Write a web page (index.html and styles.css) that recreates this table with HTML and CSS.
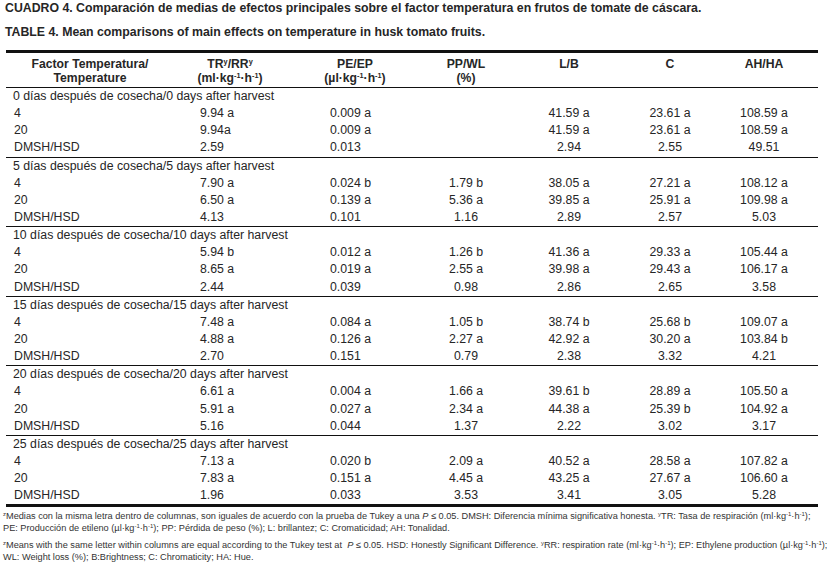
FILE: index.html
```html
<!DOCTYPE html>
<html lang="es">
<head>
<meta charset="utf-8">
<title>Cuadro 4</title>
<link rel="stylesheet" href="styles.css">
</head>
<body>
<div class="page">
  <p class="caption">CUADRO 4. Comparación de medias de efectos principales sobre el factor temperatura en frutos de tomate de cáscara.</p>
  <p class="caption caption-en">TABLE 4. Mean comparisons of main effects on temperature in husk tomato fruits.</p>

  <div class="table">
    <div class="head">
      <div class="hc c1">Factor Temperatura/<br>Temperature</div>
      <div class="hc c2">TR<sup>y</sup>/RR<sup>y</sup><br>(ml·kg<sup>-1</sup>·h<sup>-1</sup>)</div>
      <div class="hc c3">PE/EP<br>(µl·kg<sup>-1</sup>·h<sup>-1</sup>)</div>
      <div class="hc c4">PP/WL<br>(%)</div>
      <div class="hc c5">L/B</div>
      <div class="hc c6">C</div>
      <div class="hc c7">AH/HA</div>
    </div>

    <div class="group">
      <div class="label">0 días después de cosecha/0 days after harvest</div>
      <div class="row"><span>4</span><span>9.94 a</span><span>0.009 a</span><span></span><span>41.59 a</span><span>23.61 a</span><span>108.59 a</span></div>
      <div class="row"><span>20</span><span>9.94a</span><span>0.009 a</span><span></span><span>41.59 a</span><span>23.61 a</span><span>108.59 a</span></div>
      <div class="row"><span>DMSH/HSD</span><span>2.59</span><span>0.013</span><span></span><span>2.94</span><span>2.55</span><span>49.51</span></div>
    </div>

    <div class="group">
      <div class="label">5 días después de cosecha/5 days after harvest</div>
      <div class="row"><span>4</span><span>7.90 a</span><span>0.024 b</span><span>1.79 b</span><span>38.05 a</span><span>27.21 a</span><span>108.12 a</span></div>
      <div class="row"><span>20</span><span>6.50 a</span><span>0.139 a</span><span>5.36 a</span><span>39.85 a</span><span>25.91 a</span><span>109.98 a</span></div>
      <div class="row"><span>DMSH/HSD</span><span>4.13</span><span>0.101</span><span>1.16</span><span>2.89</span><span>2.57</span><span>5.03</span></div>
    </div>

    <div class="group">
      <div class="label">10 días después de cosecha/10 days after harvest</div>
      <div class="row"><span>4</span><span>5.94 b</span><span>0.012 a</span><span>1.26 b</span><span>41.36 a</span><span>29.33 a</span><span>105.44 a</span></div>
      <div class="row"><span>20</span><span>8.65 a</span><span>0.019 a</span><span>2.55 a</span><span>39.98 a</span><span>29.43 a</span><span>106.17 a</span></div>
      <div class="row"><span>DMSH/HSD</span><span>2.44</span><span>0.039</span><span>0.98</span><span>2.86</span><span>2.65</span><span>3.58</span></div>
    </div>

    <div class="group">
      <div class="label">15 días después de cosecha/15 days after harvest</div>
      <div class="row"><span>4</span><span>7.48 a</span><span>0.084 a</span><span>1.05 b</span><span>38.74 b</span><span>25.68 b</span><span>109.07 a</span></div>
      <div class="row"><span>20</span><span>4.88 a</span><span>0.126 a</span><span>2.27 a</span><span>42.92 a</span><span>30.20 a</span><span>103.84 b</span></div>
      <div class="row"><span>DMSH/HSD</span><span>2.70</span><span>0.151</span><span>0.79</span><span>2.38</span><span>3.32</span><span>4.21</span></div>
    </div>

    <div class="group">
      <div class="label">20 días después de cosecha/20 days after harvest</div>
      <div class="row"><span>4</span><span>6.61 a</span><span>0.004 a</span><span>1.66 a</span><span>39.61 b</span><span>28.89 a</span><span>105.50 a</span></div>
      <div class="row"><span>20</span><span>5.91 a</span><span>0.027 a</span><span>2.34 a</span><span>44.38 a</span><span>25.39 b</span><span>104.92 a</span></div>
      <div class="row"><span>DMSH/HSD</span><span>5.16</span><span>0.044</span><span>1.37</span><span>2.22</span><span>3.02</span><span>3.17</span></div>
    </div>

    <div class="group last">
      <div class="label">25 días después de cosecha/25 days after harvest</div>
      <div class="row"><span>4</span><span>7.13 a</span><span>0.020 b</span><span>2.09 a</span><span>40.52 a</span><span>28.58 a</span><span>107.82 a</span></div>
      <div class="row"><span>20</span><span>7.83 a</span><span>0.151 a</span><span>4.45 a</span><span>43.25 a</span><span>27.67 a</span><span>106.60 a</span></div>
      <div class="row"><span>DMSH/HSD</span><span>1.96</span><span>0.033</span><span>3.53</span><span>3.41</span><span>3.05</span><span>5.28</span></div>
    </div>
  </div>

  <div class="notes">
    <p><span class="nl"><sup>z</sup>Medias con la misma letra dentro de columnas, son iguales de acuerdo con la prueba de Tukey a una <i>P</i> ≤ 0.05. DMSH: Diferencia mínima significativa honesta. <sup>y</sup>TR: Tasa de respiración (ml·kg<sup>-1</sup>·h<sup>-1</sup>);</span><span class="nl">PE: Producción de etileno (µl·kg<sup>-1</sup>·h<sup>-1</sup>); PP: Pérdida de peso (%); L: brillantez; C: Cromaticidad; AH: Tonalidad.</span></p>
    <p><span class="nl"><sup>z</sup>Means with the same letter within columns are equal according to the Tukey test at &nbsp;<i>P</i> ≤ 0.05. HSD: Honestly Significant Difference. <sup>y</sup>RR: respiration rate (ml·kg<sup>-1</sup>·h<sup>-1</sup>); EP: Ethylene production (µl·kg<sup>-1</sup>·h<sup>-1</sup>);</span><span class="nl">WL: Weight loss (%); B:Brightness; C: Chromaticity; HA: Hue.</span></p>
  </div>
</div>
</body>
</html>
```

FILE: styles.css
```css
html, body {
  margin: 0;
  padding: 0;
  background: #ffffff;
}

body {
  font-family: "Liberation Sans", Arial, sans-serif;
  color: #262626;
}

.page {
  width: 827px;
  padding-top: 1px;
}

.caption {
  margin: 0 0 9px 5px;
  font-size: 12.3px;
  line-height: 15px;
  font-weight: bold;
}

.caption-en {
  margin-bottom: 0;
}

.table {
  margin: 10px 0 0 6px;
  width: 812px;
}

.head,
.row {
  display: grid;
  grid-template-columns: 168px 112px 138px 84px 122px 80px 108px;
}

.head {
  border-top: 3px solid #111;
  border-bottom: 1px solid #111;
  padding: 4px 0 2px;
  font-size: 12.2px;
  line-height: 14px;
  font-weight: bold;
}

.hc {
  text-align: center;
}

sup {
  font-size: 0.6em;
  line-height: 0;
  vertical-align: 0.55em;
}

.group {
  border-bottom: 1px solid #111;
  font-size: 12.3px;
}

.group.last {
  border-bottom: 3px solid #111;
}

.label,
.row {
  height: 17.15px;
  line-height: 17.15px;
}

.label {
  padding-left: 7px;
}

.row span:nth-child(1) {
  padding-left: 8px;
}

.row span:nth-child(2) {
  padding-left: 26px;
}

.row span:nth-child(3) {
  padding-left: 44px;
}

.row span:nth-child(n+4) {
  text-align: center;
}

.notes {
  margin: 3px 0 0 3px;
  font-size: 9.2px;
  line-height: 12px;
  color: #333;
}

.notes p {
  margin: 0 0 5px;
}

.nl {
  display: block;
  white-space: nowrap;
}

.notes sup {
  font-size: 0.65em;
}
```
